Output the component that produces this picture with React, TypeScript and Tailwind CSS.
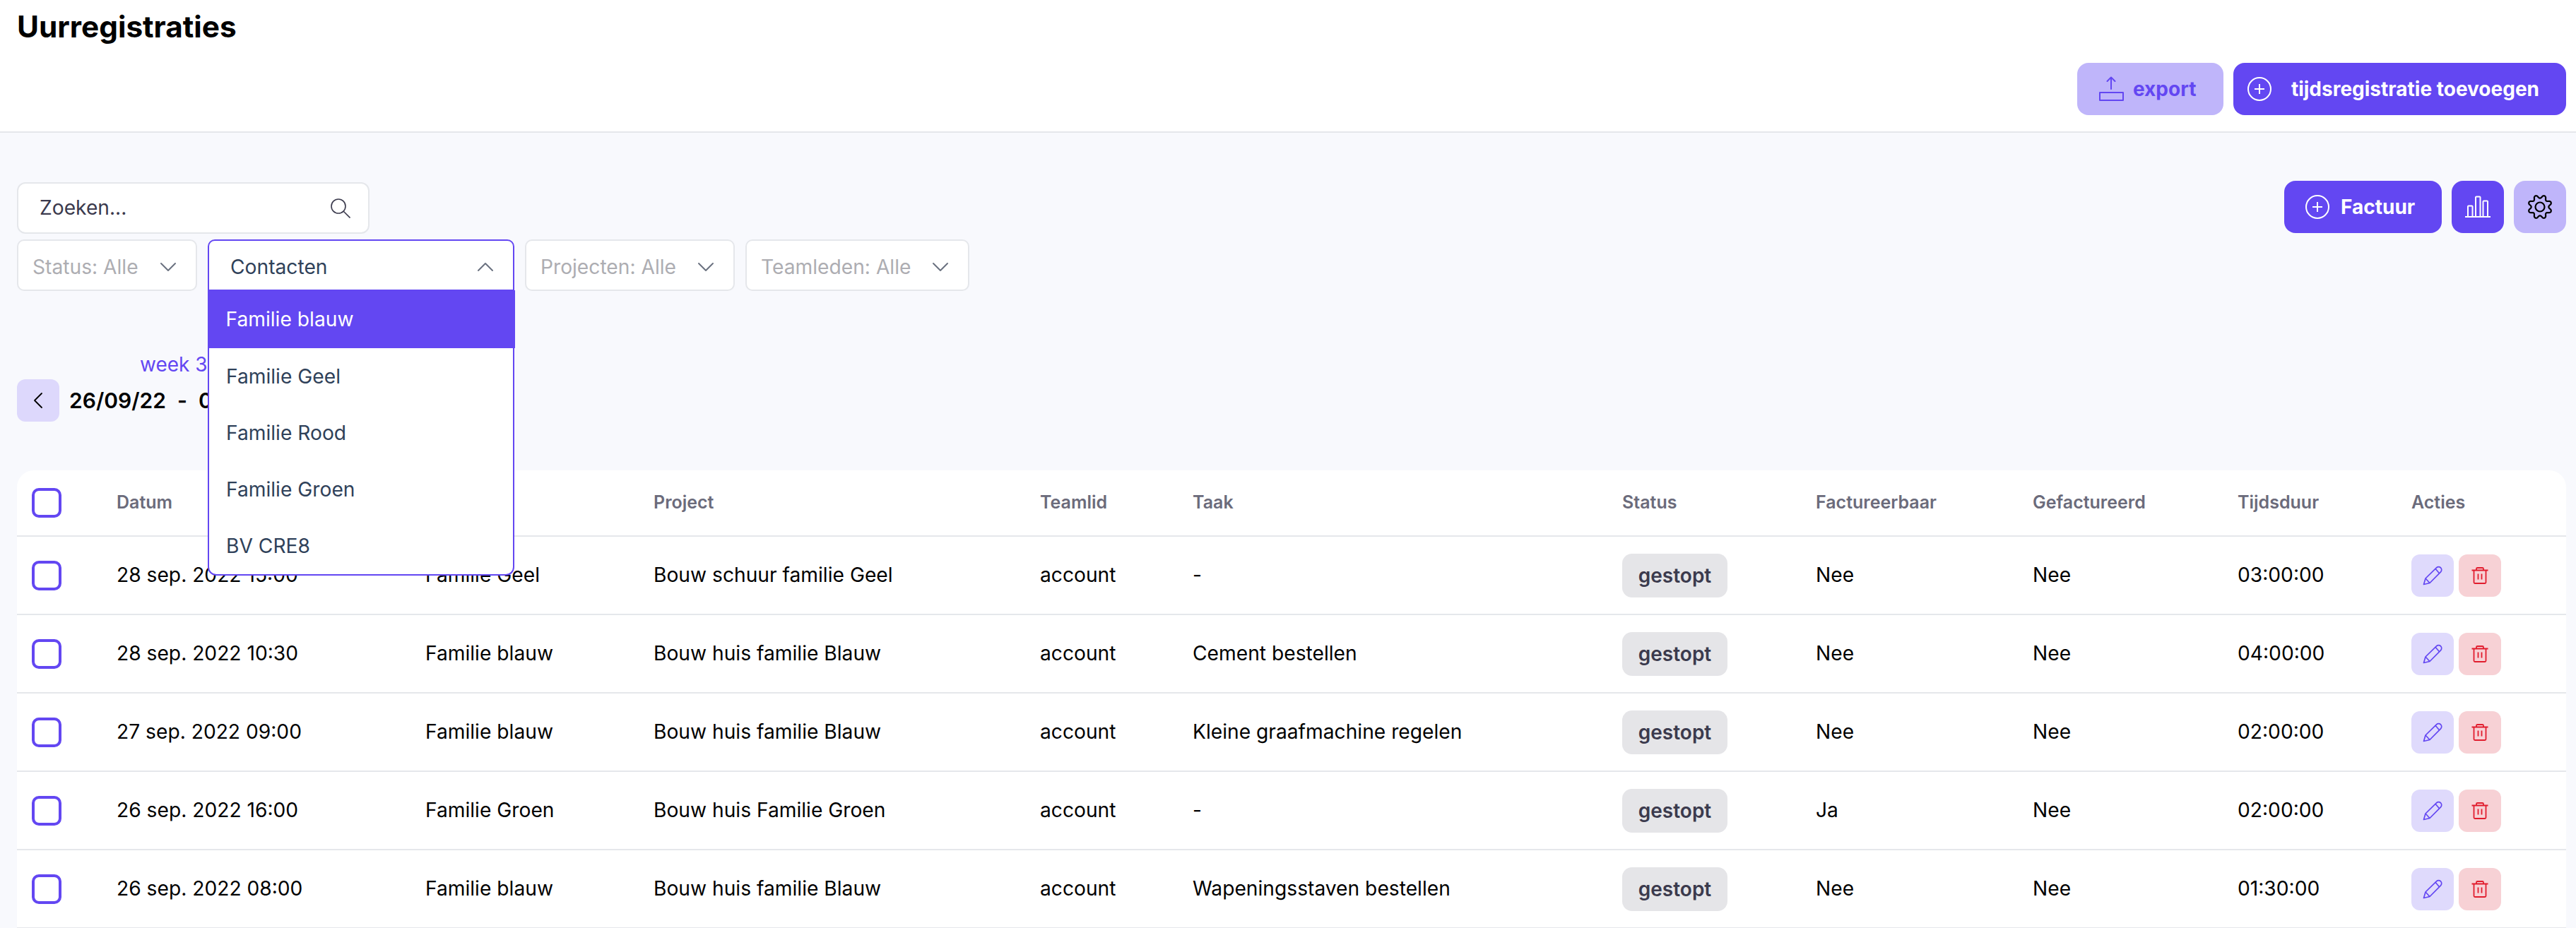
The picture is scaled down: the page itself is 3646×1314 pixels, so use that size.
import { ChevronDown, ChevronUp, ChevronLeft } from 'lucide-react';

const rows = [
  { date: '28 sep. 2022 15:00', contact: 'Familie Geel', project: 'Bouw schuur familie Geel', task: '-', billable: 'Nee', duration: '03:00:00' },
  { date: '28 sep. 2022 10:30', contact: 'Familie blauw', project: 'Bouw huis familie Blauw', task: 'Cement bestellen', billable: 'Nee', duration: '04:00:00' },
  { date: '27 sep. 2022 09:00', contact: 'Familie blauw', project: 'Bouw huis familie Blauw', task: 'Kleine graafmachine regelen', billable: 'Nee', duration: '02:00:00' },
  { date: '26 sep. 2022 16:00', contact: 'Familie Groen', project: 'Bouw huis Familie Groen', task: '-', billable: 'Ja', duration: '02:00:00' },
  { date: '26 sep. 2022 08:00', contact: 'Familie blauw', project: 'Bouw huis familie Blauw', task: 'Wapeningsstaven bestellen', billable: 'Nee', duration: '01:30:00' },
];

const options = ['Familie Geel', 'Familie Rood', 'Familie Groen', 'BV CRE8'];

const gridCols = 'grid grid-cols-[141px_437px_323px_547px_216px_608px_274px_307px_290px_246px_219px] items-center';

// wavy 8 tooth outline, valley at the top
const gearPath = Array.from({ length: 144 }, (_, i) => {
  const a = (i / 144) * Math.PI * 2;
  const c = -Math.cos(8 * a);
  const r = 14.6 + 2.3 * Math.sign(c) * Math.pow(Math.abs(c), 0.7);
  const x = 18 + r * Math.sin(a);
  const y = 18 - r * Math.cos(a);
  return `${i === 0 ? 'M' : 'L'}${x.toFixed(2)} ${y.toFixed(2)}`;
}).join(' ') + ' Z';

function PlusCircle() {
  return (
    <svg width="34" height="34" viewBox="0 0 34 34" fill="none" stroke="currentColor" strokeWidth="2" className="shrink-0">
      <circle cx="17" cy="17" r="16" />
      <path d="M17 10v14M10 17h14" />
    </svg>
  );
}

function ExportIcon() {
  return (
    <svg width="36" height="36" viewBox="0 0 36 36" fill="none" stroke="currentColor" strokeWidth="2" strokeLinecap="round" strokeLinejoin="round" className="shrink-0">
      <path d="M18 1.500v16.500M12.500 7 18 1.500 23.500 7" />
      <rect x="2" y="23" width="33" height="11" />
    </svg>
  );
}

function ChartIcon() {
  return (
    <svg width="36" height="32" viewBox="0 0 36 32" fill="none" stroke="currentColor" strokeWidth="2" className="shrink-0">
      <path d="M0 30h36" />
      <path d="M4 30V15.500a1 1 0 0 1 1-1h4.500a1 1 0 0 1 1 1V30" />
      <path d="M15 30V2.500a1 1 0 0 1 1-1h4.500a1 1 0 0 1 1 1V30" />
      <path d="M25.500 30V8.500a1 1 0 0 1 1-1h4.500a1 1 0 0 1 1 1V30" />
    </svg>
  );
}

function GearIcon() {
  return (
    <svg width="36" height="36" viewBox="0 0 36 36" fill="none" stroke="currentColor" strokeWidth="2.200" strokeLinejoin="round">
      <path d={gearPath} />
      <circle cx="18" cy="18" r="6.500" />
    </svg>
  );
}

function SearchIcon() {
  return (
    <svg width="28" height="28" viewBox="0 0 28 28" fill="none" stroke="currentColor" strokeWidth="1.600" className="shrink-0">
      <circle cx="11" cy="11" r="10" />
      <path d="M18 18l9.500 9.500" />
    </svg>
  );
}

function PencilIcon() {
  return (
    <svg width="28" height="28" viewBox="0 0 28 28" fill="none" stroke="currentColor" strokeWidth="1.700" strokeLinejoin="round">
      <path d="M1.500 26.500 4 18 19.500 2.800a4.200 4.200 0 0 1 6 6L10 24.500z" />
      <path d="M4 18l6 6.500M18 4.300l5.500 6.500" />
    </svg>
  );
}

function TrashIcon() {
  return (
    <svg width="24" height="24" viewBox="0 0 24 24" fill="none" stroke="currentColor" strokeWidth="1.800">
      <path d="M0.500 4.500h23M7 4.500V2.500a1.500 1.500 0 0 1 1.500-1.500h7a1.500 1.500 0 0 1 1.500 1.500v2" />
      <path d="M3.500 4.500v17a1.500 1.500 0 0 0 1.500 1.500h14a1.500 1.500 0 0 0 1.500-1.500v-17" />
      <path d="M9.500 9.500v8M14.500 9.500v8" />
    </svg>
  );
}

function Checkbox() {
  return <div className="w-[42px] h-[42px] ml-[21px] rounded-[10px] border-[4px] border-[#6347f2] bg-white" />;
}

function FilterSelect({ label, width }: { label: string; width: string }) {
  return (
    <div className={`${width} h-[73px] flex items-center justify-between pt-[5px] pl-[20px] pr-[19px] bg-white border-2 border-[#e5e7eb] rounded-[10px] text-[28.200px] text-[#adadb2]`}>
      <span>{label}</span>
      <ChevronDown size={40} strokeWidth={1.200} className="text-[#6b7280]" />
    </div>
  );
}

export default function App() {
  return (
    <div className="w-[3646px] h-[1314px] overflow-hidden bg-[#f8f9fd] font-['Inter',sans-serif] text-black">
      {/* Header */}
      <div className="h-[188px] bg-white border-b-2 border-[#e5e7eb] pl-[24px] pr-[14px] pt-[12px] flex flex-col">
        <h1 className="text-[42.300px] leading-[52px] font-bold">Uurregistraties</h1>
        <div className="flex justify-end gap-[14px] mt-[25px]">
          <button className="h-[74px] w-[207px] flex items-center pl-[30px] gap-[13px] rounded-[16px] bg-[#bfb5fa] text-[#6347f2] text-[28px] font-bold">
            <ExportIcon />
            export
          </button>
          <button className="h-[74px] w-[471px] flex items-center justify-between pl-[20px] pr-[38px] rounded-[16px] bg-[#6347f2] text-white text-[28px] font-bold">
            <PlusCircle />
            tijdsregistratie toevoegen
          </button>
        </div>
      </div>

      {/* Filters */}
      <div className="relative pl-[24px] pr-[14px] pt-[70px]">
        <div className="flex justify-between items-start">
          <div className="flex flex-col gap-[8px]">
            <div className="w-[499px] h-[73px] flex items-center justify-between pl-[30px] pr-[25px] bg-white border-2 border-[#e5e7eb] rounded-[12px] text-[28.200px] text-[#3b3a4d]">
              <span>Zoeken...</span>
              <SearchIcon />
            </div>
            <div className="flex gap-[15px]">
              <FilterSelect label="Status: Alle" width="w-[255px]" />
              {/* open select */}
              <div className="relative w-[434px] h-[73px]">
                <div className="h-[73px] flex items-center justify-between pt-[5px] pl-[30px] pr-[19px] bg-white border-[2.500px] border-[#6347f2] rounded-t-[10px] text-[28.200px] text-[#2f4159]">
                  <span>Contacten</span>
                  <ChevronUp size={40} strokeWidth={1.200} className="text-[#6b7280]" />
                </div>
                <div className="absolute z-10 left-0 right-0 top-[72px] bg-white border-x-[2.500px] border-b-[2.500px] border-[#6347f2] rounded-b-[12px] text-[28.200px] text-[#2f4159]">
                  <div className="-mx-[2.500px] h-[82px] flex items-center pl-[26px] bg-[#6347f2] text-white">Familie blauw</div>
                  {options.map((o) => (
                    <div key={o} className="h-[80px] flex items-center pl-[24px]">{o}</div>
                  ))}
                </div>
              </div>
              <FilterSelect label="Projecten: Alle" width="w-[297px]" />
              <FilterSelect label="Teamleden: Alle" width="w-[317px]" />
            </div>
          </div>
          <div className="flex gap-[14px] mt-[-2px]">
            <button className="h-[74px] w-[223px] flex items-center pl-[30px] gap-[16px] rounded-[16px] bg-[#6347f2] text-white text-[28px] font-bold">
              <PlusCircle />
              Factuur
            </button>
            <button className="h-[74px] w-[74px] flex items-center justify-center rounded-[16px] bg-[#6347f2] text-white">
              <ChartIcon />
            </button>
            <button className="h-[74px] w-[74px] flex items-center justify-center rounded-[16px] bg-[#bfb5fa] text-black">
              <GearIcon />
            </button>
          </div>
        </div>

        {/* Week nav */}
        <div className="mt-[86px] w-fit">
          <div className="pl-[174px] text-[28px] leading-[36px] text-[#6347f2]">week 39</div>
          <div className="flex items-center gap-[14px] mt-[3px]">
            <button className="w-[60px] h-[60px] flex items-center justify-center rounded-[12px] bg-[#ddd8fc]">
              <ChevronLeft size={40} strokeWidth={1.100} />
            </button>
            <span className="flex gap-[16px] text-[30px] font-semibold">
              <span>26/09/22</span>
              <span>-</span>
              <span>02/10/22</span>
            </span>
          </div>
        </div>

        {/* Table */}
        <div className="mt-[69px] w-[3608px] bg-white rounded-t-[24px]">
          <div className={`${gridCols} h-[94px] border-b-2 border-[#e5e7eb] text-[25px] font-semibold text-[#6b6b7b]`}>
            <Checkbox />
            <div>Datum</div>
            <div>Contact</div>
            <div>Project</div>
            <div>Teamlid</div>
            <div>Taak</div>
            <div>Status</div>
            <div>Factureerbaar</div>
            <div>Gefactureerd</div>
            <div>Tijdsduur</div>
            <div>Acties</div>
          </div>
          {rows.map((r) => (
            <div key={r.date} className={`${gridCols} h-[111px] border-b-2 border-[#e5e7eb] text-[28.200px]`}>
              <Checkbox />
              <div>{r.date}</div>
              <div>{r.contact}</div>
              <div>{r.project}</div>
              <div>account</div>
              <div>{r.task}</div>
              <div>
                <span className="inline-flex items-center justify-center w-[149px] h-[62px] rounded-[14px] bg-[#e5e5e8] text-[#3b3a4d] text-[28px] font-semibold">gestopt</span>
              </div>
              <div>{r.billable}</div>
              <div>Nee</div>
              <div>{r.duration}</div>
              <div className="flex gap-[7px]">
                <button className="w-[60px] h-[60px] flex items-center justify-center rounded-[12px] bg-[#dfdafc] text-[#6347f2]">
                  <PencilIcon />
                </button>
                <button className="w-[60px] h-[60px] flex items-center justify-center rounded-[12px] bg-[#f7d1d5] text-[#e11d2e]">
                  <TrashIcon />
                </button>
              </div>
            </div>
          ))}
        </div>
      </div>
    </div>
  );
}
